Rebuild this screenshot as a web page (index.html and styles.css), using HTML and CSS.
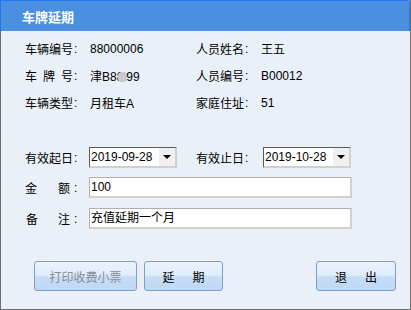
FILE: index.html
```html
<!DOCTYPE html>
<html>

<head>
    <meta charset="utf-8">
    <link rel="stylesheet" href="styles.css">
    <title>车牌延期</title>
</head>

<body>
    <div class="dialog">
        <div class="dialog-title">车牌延期</div>
        <div class="dialog-body">
            <div class="info">
                <span class="label"><span class="lt">车辆编号</span>:</span>
                <span class="val">88000006</span>
                <span class="label"><span class="lt">人员姓名</span>:</span>
                <span class="val">王五</span>

                <span class="label"><span class="lt"><i>车</i><i>牌</i><i>号</i></span>:</span>
                <span class="val">津B88<b class="blur"></b>99</span>
                <span class="label"><span class="lt">人员编号</span>:</span>
                <span class="val">B00012</span>

                <span class="label"><span class="lt">车辆类型</span>:</span>
                <span class="val">月租车A</span>
                <span class="label"><span class="lt">家庭住址</span>:</span>
                <span class="val">51</span>
            </div>

            <div class="form">
                <div class="field-row">
                    <span class="label"><span class="lt">有效起日</span>:</span>
                    <div class="combo">
                        <span class="combo-text">2019-09-28</span>
                        <span class="combo-btn"><b class="arrow"></b></span>
                    </div>
                    <span class="label label-right"><span class="lt">有效止日</span>:</span>
                    <div class="combo">
                        <span class="combo-text">2019-10-28</span>
                        <span class="combo-btn"><b class="arrow"></b></span>
                    </div>
                </div>
                <div class="field-row row-amount">
                    <span class="label"><span class="lt"><i>金</i><i class="tight">额</i></span>:</span>
                    <div class="text-input">100</div>
                </div>
                <div class="field-row row-note">
                    <span class="label"><span class="lt"><i class="pad">备</i><i class="tight">注</i></span>:</span>
                    <div class="text-input">充值延期一个月</div>
                </div>
            </div>

            <div class="actions">
                <button class="btn btn-print" disabled>打印收费小票</button>
                <button class="btn btn-extend"><span>延</span><span>期</span></button>
                <button class="btn btn-exit"><span>退</span><span>出</span></button>
            </div>
        </div>
    </div>
</body>

</html>
```

FILE: styles.css
```css
html,
body {
    margin: 0;
    padding: 0;
}

body {
    font-family: "Liberation Sans", "Noto Sans CJK SC", sans-serif;
    font-size: 12px;
    color: #000;
    background: #eaf0f8;
}

.dialog {
    width: 411px;
    height: 310px;
    box-sizing: border-box;
    border-right: 1px solid #6e6e6e;
    display: flex;
    flex-direction: column;
}

.dialog-title {
    height: 31px;
    box-sizing: border-box;
    background: #4a8fe0;
    border: 1px solid #1f78f0;
    border-bottom: none;
    border-top-right-radius: 2px;
    color: #fff;
    font-weight: bold;
    font-size: 13px;
    padding-left: 21px;
    display: flex;
    align-items: center;
}

.dialog-body {
    flex: 1;
    border-left: 1px solid #6e6e6e;
    border-bottom: 1px solid #6e6e6e;
    background: #eaf0f8;
    padding: 4px 0 0 24px;
}

.info {
    display: grid;
    grid-template-columns: 65px 106px 65px auto;
    grid-auto-rows: 27px;
    align-items: center;
}

.label {
    display: inline-flex;
    align-items: center;
    white-space: nowrap;
}

.lt {
    display: inline-flex;
    justify-content: space-between;
    width: 48px;
    margin-right: 1px;
}

.lt i {
    font-style: normal;
}

.lt .tight {
    margin-right: 3px;
}

.lt .pad {
    margin-left: 1px;
}

.val {
    white-space: nowrap;
}

.blur {
    display: inline-block;
    width: 9px;
    height: 10px;
    margin: 0 -1px 0 -5px;
    vertical-align: -1px;
    border-radius: 4px;
    background: #c5c9d1;
}

.form {
    margin-top: 31px;
}

.field-row {
    display: flex;
    align-items: center;
}

.field-row .label {
    width: 64px;
}

.field-row .label-right {
    width: 67px;
    margin-left: 19px;
}

.combo {
    width: 88px;
    height: 21px;
    box-sizing: border-box;
    display: flex;
    background: #fff;
    border-top: 1px solid #5a5a5a;
    border-left: 1px solid #5a5a5a;
    border-right: 2px solid #d4d0c8;
    border-bottom: 2px solid #d4d0c8;
}

.combo-text {
    flex: 1;
    padding-left: 1px;
    line-height: 18px;
}

.combo-btn {
    width: 16px;
    background: #f0f0f0;
    border-left: 1px solid #fff;
    display: flex;
    align-items: center;
    justify-content: center;
}

.arrow {
    width: 0;
    height: 0;
    border-left: 4px solid transparent;
    border-right: 4px solid transparent;
    border-top: 4px solid #000;
}

.row-amount {
    margin-top: 9px;
}

.row-note {
    margin-top: 10px;
}

.text-input {
    width: 263px;
    height: 21px;
    box-sizing: border-box;
    background: #fff;
    border-top: 1px solid #b0b0b0;
    border-left: 1px solid #b0b0b0;
    border-right: 2px solid #d4d0c8;
    border-bottom: 2px solid #d4d0c8;
    padding-left: 1px;
    line-height: 18px;
}

.actions {
    display: flex;
    margin: 32px 14px 0 9px;
}

.btn {
    height: 30px;
    box-sizing: border-box;
    border: 1px solid #7c9ec9;
    border-radius: 3px;
    background: linear-gradient(#eaf3fd, #e0edfb 45%, #c6ddf6 55%, #bfd8f3);
    font-family: "Liberation Sans", "Noto Sans CJK SC", sans-serif;
    font-size: 12px;
    color: #000;
    padding: 0;
    display: flex;
    align-items: center;
    justify-content: center;
    gap: 18px;
}

.btn-print {
    width: 103px;
    color: #8a8e96;
}

.btn-extend {
    width: 79px;
    margin-left: 7px;
}

.btn-exit {
    width: 80px;
    margin-left: auto;
}
```
